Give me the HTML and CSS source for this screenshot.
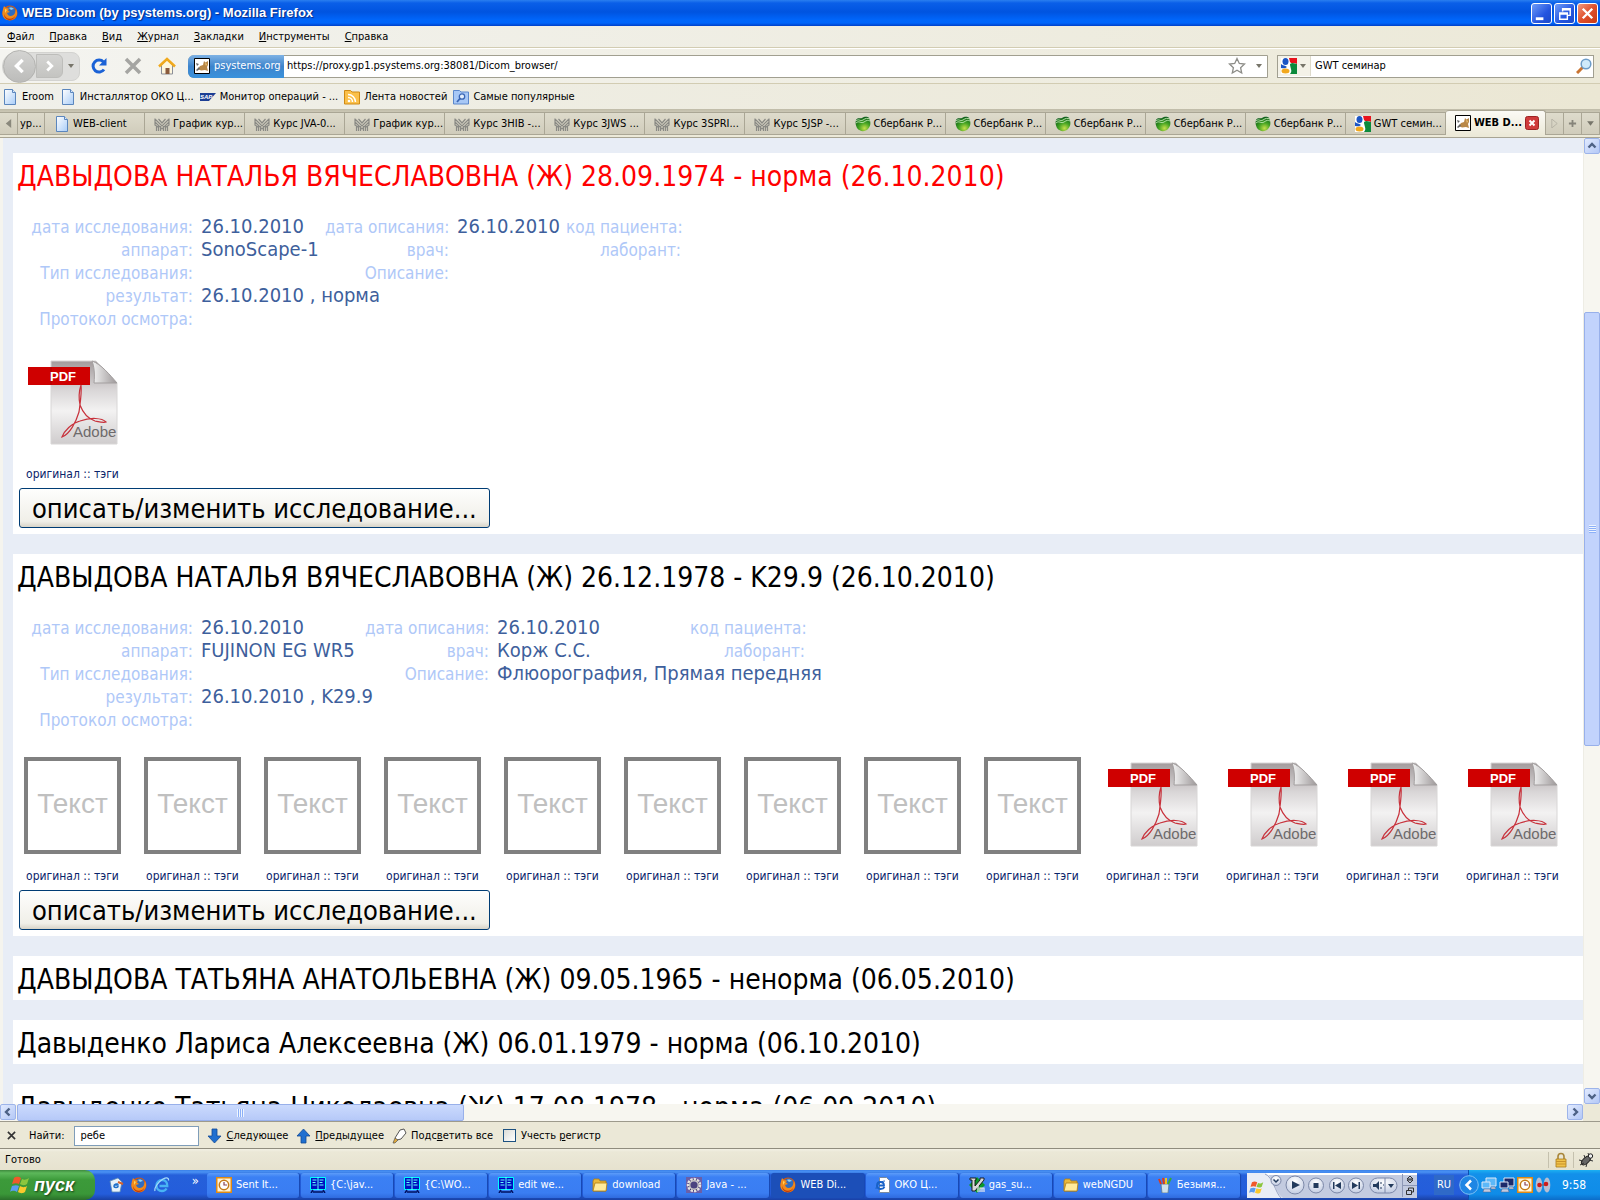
FILE: index.html
```html
<!DOCTYPE html>
<html lang="ru">
<head>
<meta charset="utf-8">
<title>WEB Dicom (by psystems.org)</title>
<link rel="stylesheet" href="styles.css">
</head>
<body>
<svg class="defs" width="0" height="0" aria-hidden="true">
  <defs>
    <linearGradient id="g-sheet" x1="0" y1="0" x2="1" y2="1"><stop offset="0" stop-color="#fff"/><stop offset="1" stop-color="#a9cdf8"/></linearGradient>
    <linearGradient id="g-pdf" x1="0" y1="0" x2="0" y2="1"><stop offset="0" stop-color="#a39c9d"/><stop offset=".35" stop-color="#d9d6d7"/><stop offset=".6" stop-color="#f3f2f2"/><stop offset="1" stop-color="#cfcccd"/></linearGradient>
    <linearGradient id="g-fold" x1="0" y1="0" x2="1" y2="0"><stop offset="0" stop-color="#f4f4f4"/><stop offset="1" stop-color="#9c9798"/></linearGradient>
    <radialGradient id="g-green" cx=".6" cy=".8" r=".8"><stop offset="0" stop-color="#c5e04a"/><stop offset=".5" stop-color="#3fa021"/><stop offset="1" stop-color="#0d5a1c"/></radialGradient>
    <radialGradient id="g-btn" cx=".5" cy=".3" r=".8"><stop offset="0" stop-color="#fff"/><stop offset="1" stop-color="#b9c4de"/></radialGradient>
    <symbol id="i-page" viewBox="0 0 16 16"><path d="M2.500.5h8l3 3v12h-11z" fill="url(#g-sheet)" stroke="#5b86bd"/><path d="M10.500.5v3h3" fill="#dbe9fb" stroke="#5b86bd"/></symbol>
    <symbol id="i-fox" viewBox="0 0 16 16"><circle cx="8" cy="8" r="7.500" fill="#d9590b"/><circle cx="8.500" cy="6.500" r="5" fill="#2f6cc0"/><path d="M7 3c2-1 4 0 5 1-2 0-2 1-3 1z" fill="#8fd0f4"/><path d="M1 4 2 1l2 2 3 .5-1 2 2 1.500-3 1 1 2c2 2 6 1 7-2l1-4c2 4 1 7-1 9-3 3-8 3-11 0-2-2-2-5-1-9z" fill="#f08a1c"/><path d="M2 9c1 4 5 6 9 4 2-1 3-3 3-5 0 4-3 7-6 7s-6-2-6-6z" fill="#c23a0a"/><path d="M3 4l2 1-2 3z" fill="#ffd45a"/></symbol>
    <symbol id="i-cat" viewBox="0 0 16 16"><path d="M.5.5h15v15H.5z" fill="#fff" stroke="#000"/><path d="M4 11 6 8l3-1 1-4 1.500 1.500L14 3v4l-1 2 1 4-3-1-4 .5z" fill="#b98847"/><path d="M2 5l3 1-2 2zM2 12l3-3 1 2-3 2z" fill="#666"/><path d="M11 5l2 1-1 2z" fill="#f0c878"/></symbol>
    <symbol id="i-grid" viewBox="0 0 16 16"><path d="M1 3l7 7 7-7M1 6l7 7 7-7M1 9l3 2M15 9l-3 2M4.500 3l3.500 4 3.500-4M2.500 10v5M4.500 10v5M6.500 10v5M9.500 10v5M11.500 10v5M13.500 10v5M1 2.500v7M15 2.500v7" fill="none" stroke="#8a8a85" stroke-width="1.200"/></symbol>
    <symbol id="i-sber" viewBox="0 0 16 16"><path d="M1 4c2-3 4-1 6-2s5-2 7 0c2 4 2 8-1 11-3 3-8 3-11-1-1-2-2-5-1-8z" fill="url(#g-green)"/><path d="M1 5c3-3 4 1 7-1s4-2 7-1M1 7c3-3 5 1 8-1s4-2 6-1" fill="none" stroke="#bfeab0" stroke-width=".9"/></symbol>
    <symbol id="i-google" viewBox="0 0 16 16"><path fill="#fff" d="M0 0h16v16H0z"/><path d="M8 0h8v6c-3-2-6 0-7-2z" fill="#e8121c"/><path d="M9 6c3-2 5 0 7 0v10H9c3-3 0-6 0-10z" fill="#0b8a3c"/><ellipse cx="4.500" cy="3.500" rx="3" ry="3.500" fill="#1b55c4"/><path d="M0 6c2 2 4 1 6 3-2 2-4 1-6 1z" fill="#1b55c4"/><ellipse cx="4.500" cy="13" rx="4" ry="2.500" fill="#f2a81d"/></symbol>
    <symbol id="i-folder" viewBox="0 0 16 16"><path d="M1 4l1-2h5l1 2h6v10H1z" fill="#e9b83c" stroke="#b07d12" stroke-width=".8"/><path d="M1 14 3 6h12l-1 8z" fill="#ffeb9c" stroke="#b07d12" stroke-width=".8"/></symbol>
    <symbol id="i-far" viewBox="0 0 16 16"><path d="M.5.5h15v12H.5z" fill="#0010c0" stroke="#0ff"/><path d="M8 0v13M2.500 3h4M2.500 5.500h3M2.500 8h4M9.500 3h4M9.500 5.500h3M9.500 8h4" stroke="#6ff" stroke-width="1" fill="none"/><path d="M3 13l-2 3M13 13l2 3M3 15h10" stroke="#001060" stroke-width="1.500"/></symbol>
    <symbol id="i-outlook" viewBox="0 0 16 16"><path d="M.75.75h14.500v14.500H.75z" fill="#fff3d6" stroke="#e08a12" stroke-width="1.500"/><circle cx="8" cy="8" r="4.700" fill="#fff" stroke="#c47a18" stroke-width="1.500"/><path d="M8 5v3h3" fill="none" stroke="#845" stroke-width="1.200"/></symbol>
    <symbol id="i-ie" viewBox="0 0 16 16"><path d="M12.500 11.500c-1 2-3 2.500-4.500 2.500-3.500 0-5.500-2.500-5.500-5.500S5 3 8 3c3.500 0 5.500 2.500 5.300 6H5.500" fill="none" stroke="#49b4f4" stroke-width="2.300"/><path d="M1 14c-1-3 3-9 8-12 4-2 6-1 5.500 1.500" fill="none" stroke="#a8dcfa" stroke-width="1.200"/></symbol>
    <symbol id="i-iepage" viewBox="0 0 16 16"><path d="M4.500.5h7l3 3v12h-10z" fill="#fff" stroke="#7a8aa0"/><path d="M9.500 10c-1 2-3 2-4 2-2 0-3.500-1.500-3.500-3.500S3.500 5 5.500 5 9 6.500 9 8.500H4" fill="none" stroke="#1762c8" stroke-width="1.800"/><path d="M1 12c0-3 4-8 9-8" fill="none" stroke="#1762c8"/></symbol>
    <symbol id="i-eclipse" viewBox="0 0 16 16"><path d="M0 0h16v16H0z" fill="#6a5fa8"/><circle cx="8" cy="8" r="6" fill="#3a3560" stroke="#e4e2e0" stroke-width="2.400" stroke-dasharray="2.400 1"/><circle cx="8" cy="8" r="4.300" fill="#4a4480" stroke="#c9c7c8" stroke-width="1.400"/></symbol>
    <symbol id="i-vim" viewBox="0 0 16 16"><path d="M8 0l8 8-8 8-8-8z" fill="#0a9a2a"/><path d="M1 1h6v2H6v6l5-6V1h4v2L6 14H3V3H1z" fill="#d8d8d8" stroke="#111" stroke-width=".9"/><path d="M9 9v6M11 15v-4h2v4M13 11h2v4" stroke="#eee" fill="none" stroke-width="1.200"/></symbol>
    <symbol id="i-paint" viewBox="0 0 16 16"><path d="M4 7h8l-1 9H5z" fill="#cfe0ea" stroke="#5b7890" stroke-width=".8"/><path d="M4 7 2 2M7 7 6 1" stroke="#e03a1c" stroke-width="2"/><path d="M9 7V1" stroke="#f2c11c" stroke-width="2"/><path d="M11 7l3-6" stroke="#38a838" stroke-width="2"/></symbol>
    <symbol id="i-flag" viewBox="0 0 20 20"><path d="M4 3c3-2 5-1 7 0L9 9C7 8 5 8 2 9z" fill="#f0592a"/><path d="M12 4c2 1 4 1 7-1l-2 6c-3 2-5 1-7 0z" fill="#8cc63e"/><path d="M2 11c3-1 5-1 7 0l-2 6c-2-1-4-2-7 0z" fill="#5a9cf0"/><path d="M10 11c2 1 4 2 7 0l-2 6c-3 2-5 1-7 0z" fill="#fbc92d"/></symbol>
    <symbol id="i-pc" viewBox="0 0 16 16"><path d="M5 1h10v8H5z" fill="var(--screen)" stroke="#dfe8f6"/><path d="M1 5h8v6H1z" fill="var(--screen)" stroke="#dfe8f6"/><path d="M3 12h6l1 3H2zM10 10h4l1 2h-5z" fill="#c3cbe0" stroke="#5a6788" stroke-width=".5"/></symbol>
    <symbol id="i-down" viewBox="0 0 8 8"><path d="M1 2h6L4 6z"/></symbol>
    <symbol id="i-chev" viewBox="0 0 10 10"><path d="M1.500 6.500 5 3l3.500 3.500" fill="none" stroke="#4d6185" stroke-width="2.400"/></symbol>
    <symbol id="i-pdf" viewBox="0 0 97 97">
      <path d="M27 6h45l21 22v61H27z" fill="url(#g-pdf)" stroke="#d8d6d6"/>
      <path d="M68 6c2 5 3 12 2 22h23C86 20 77 9 68 6z" fill="url(#g-fold)" stroke="#a39f9f"/>
      <path d="M4 12h62v18H4z" fill="#cf0000"/>
      <path d="M27 12v18" stroke="#a80000"/>
      <text x="26" y="26" class="pdf-tag">PDF</text>
      <path d="M57 30c-3 9-2 15-1 20 3 8 9 14 15 16 5 1 9 2 11 1-4-4-15-5-26-1-8 2-16 10-18 16 8-3 14-15 17-25 1-8 3-19 2-27z" fill="none" stroke="#c8323c" stroke-width="1.200"/>
      <text x="49" y="82" class="pdf-brand">Adobe</text>
    </symbol>
  </defs>
</svg>

<header class="chrome">
  <div class="titlebar">
    <svg class="ico"><use href="#i-fox"/></svg>
    <h1>WEB Dicom (by psystems.org) - Mozilla Firefox</h1>
    <div class="win-buttons">
      <button class="win" aria-label="Свернуть"><svg viewBox="0 0 20 20"><path d="M4 14h8v3H4z" fill="#fff"/></svg></button>
      <button class="win" aria-label="Восстановить"><svg viewBox="0 0 20 20"><path d="M8 8V5h8v7h-3M8 6h8M5 9.500h8V16H5zM5 10.500h8" fill="none" stroke="#fff" stroke-width="1.500"/></svg></button>
      <button class="win close" aria-label="Закрыть"><svg viewBox="0 0 20 20"><path d="M5 5l10 10M15 5 5 15" stroke="#fff" stroke-width="2.500"/></svg></button>
    </div>
  </div>

  <nav class="menubar">
    <button><u>Ф</u>айл</button><button><u>П</u>равка</button><button><u>В</u>ид</button><button><u>Ж</u>урнал</button><button><u>З</u>акладки</button><button><u>И</u>нструменты</button><button><u>С</u>правка</button>
  </nav>

  <div class="navbar">
    <div class="history">
      <button class="back" aria-label="Назад"><svg viewBox="0 0 32 32"><path d="M19 9l-7 7 7 7" fill="none" stroke="#fff" stroke-width="4"/></svg></button>
      <button class="fwd" aria-label="Вперёд"><svg viewBox="0 0 24 24"><path d="M9 7l5 5-5 5" fill="none" stroke="#fff" stroke-width="3"/></svg></button>
      <svg class="caret"><use href="#i-down"/></svg>
    </div>
    <button class="tool" aria-label="Обновить"><svg viewBox="0 0 18 18"><path d="M14 12.500A6 6 0 1 1 13.500 5" fill="none" stroke="#1b62d6" stroke-width="3"/><path d="M16.500 1v7.500H9z" fill="#1b62d6"/></svg></button>
    <button class="tool" aria-label="Остановить"><svg viewBox="0 0 18 18"><path d="M2 2l14 14M16 2 2 16" stroke="#a5a5a2" stroke-width="3.500"/></svg></button>
    <button class="tool" aria-label="Домой"><svg viewBox="0 0 18 18"><path d="M3.500 8v9h11V8L9 3z" fill="#fdf6dd" stroke="#8b8f98"/><path d="M1 9.500 9 2l8 7.500" fill="none" stroke="#f0a91c" stroke-width="2.500"/><path d="M7.500 11h4v6h-4z" fill="#8a5a3c"/></svg></button>
    <div class="urlbar">
      <span class="identity"><svg class="ico"><use href="#i-cat"/></svg>psystems.org</span>
      <input aria-label="Адрес" value="https://proxy.gp1.psystems.org:38081/Dicom_browser/">
      <svg class="star" viewBox="0 0 18 18"><path d="M9 1.500l2.300 5 5.200.6-3.900 3.600 1.100 5.300L9 13.300 4.300 16l1.100-5.300L1.500 7.100l5.200-.6z" fill="#fff" stroke="#8d8d88" stroke-width="1.300"/></svg>
      <svg class="caret"><use href="#i-down"/></svg>
    </div>
    <div class="searchbar">
      <span class="engine"><svg class="ico"><use href="#i-google"/></svg><svg class="caret"><use href="#i-down"/></svg></span>
      <input aria-label="Поиск" value="GWT семинар">
      <svg class="ico" viewBox="0 0 16 16"><path d="M1 15l6-6" stroke="#c97432" stroke-width="3"/><circle cx="10" cy="6" r="4.800" fill="#cfeafb" stroke="#6d9cc8" stroke-width="1.500"/></svg>
    </div>
  </div>

  <nav class="bookmarks">
    <a href="#"><svg class="ico"><use href="#i-page"/></svg>Eroom</a>
    <a href="#"><svg class="ico"><use href="#i-page"/></svg>Инсталлятор ОКО Ц...</a>
    <a href="#"><svg class="ico" viewBox="0 0 16 16"><path d="M0 4h16l-7 8H0z" fill="#1c3e94"/><text x="0" y="10" class="sap">SAP</text></svg>Монитор операций - ...</a>
    <a href="#"><svg class="ico" viewBox="0 0 16 16"><path d="M.5 3V1.500h6L8 3h7.500v12H.5z" fill="#fbc04a" stroke="#cf8a14"/><circle cx="5" cy="12" r="1.300" fill="#fff"/><path d="M4 8.500a4.500 4.500 0 0 1 4.500 4.500M4 5.500a7.500 7.500 0 0 1 7.500 7.500" fill="none" stroke="#fff" stroke-width="1.500"/></svg>Лента новостей</a>
    <a href="#"><svg class="ico" viewBox="0 0 16 16"><path d="M.5 3V1.500h6L8 3h7.500v12H.5z" fill="#a8c8f6" stroke="#5c88cc"/><circle cx="9" cy="7.500" r="2.700" fill="#e4effc" stroke="#3a66b4" stroke-width="1.300"/><path d="M7 9.500 4 13" stroke="#3a66b4" stroke-width="1.800"/></svg>Самые популярные</a>
  </nav>

  <div class="tabs">
    <button class="strip" aria-label="Влево"><svg viewBox="0 0 8 10"><path d="M7 0v10L1 5z" fill="#8a887c"/></svg></button>
    <button class="tab cut">ур...</button>
    <button class="tab"><svg class="ico"><use href="#i-page"/></svg>WEB-client</button>
    <button class="tab"><svg class="ico"><use href="#i-grid"/></svg>График кур...</button>
    <button class="tab"><svg class="ico"><use href="#i-grid"/></svg>Курс JVA-0...</button>
    <button class="tab"><svg class="ico"><use href="#i-grid"/></svg>График кур...</button>
    <button class="tab"><svg class="ico"><use href="#i-grid"/></svg>Курс 3HIB -...</button>
    <button class="tab"><svg class="ico"><use href="#i-grid"/></svg>Курс 3JWS ...</button>
    <button class="tab"><svg class="ico"><use href="#i-grid"/></svg>Курс 3SPRI...</button>
    <button class="tab"><svg class="ico"><use href="#i-grid"/></svg>Курс 5JSP -...</button>
    <button class="tab"><svg class="ico"><use href="#i-sber"/></svg>Сбербанк Р...</button>
    <button class="tab"><svg class="ico"><use href="#i-sber"/></svg>Сбербанк Р...</button>
    <button class="tab"><svg class="ico"><use href="#i-sber"/></svg>Сбербанк Р...</button>
    <button class="tab"><svg class="ico"><use href="#i-sber"/></svg>Сбербанк Р...</button>
    <button class="tab"><svg class="ico"><use href="#i-sber"/></svg>Сбербанк Р...</button>
    <button class="tab"><svg class="ico"><use href="#i-google"/></svg>GWT семин...</button>
    <button class="tab active"><svg class="ico"><use href="#i-cat"/></svg>WEB D...<svg class="tab-close" viewBox="0 0 14 14"><rect x=".5" y=".5" width="13" height="13" rx="2" fill="#cf3b3b" stroke="#9c2323"/><path d="M4.500 4.500l5 5M9.500 4.500l-5 5" stroke="#fff" stroke-width="2"/></svg></button>
    <button class="strip" aria-label="Вправо"><svg viewBox="0 0 8 10"><path d="M1 0v10l6-5z" fill="none" stroke="#b3b1a4"/></svg></button>
    <button class="strip" aria-label="Новая вкладка"><svg viewBox="0 0 10 10"><path d="M5 1v8M1 5h8" stroke="#86847a" stroke-width="2"/></svg></button>
    <button class="strip" aria-label="Список вкладок"><svg class="caret"><use href="#i-down"/></svg></button>
  </div>
</header>

<div class="viewport">
  <main class="records">
    <article class="record urgent">
      <h2>ДАВЫДОВА НАТАЛЬЯ ВЯЧЕСЛАВОВНА (Ж) 28.09.1974 - норма (26.10.2010)</h2>
      <table class="meta">
        <colgroup><col class="c-label"><col class="c-device"><col class="c-second"><col class="c-date"><col class="c-third"></colgroup>
        <tr><th>дата исследования:</th><td>26.10.2010</td><th>дата описания:</th><td>26.10.2010</td><th>код пациента:</th></tr>
        <tr><th>аппарат:</th><td>SonoScape-1</td><th>врач:</th><td></td><th>лаборант:</th></tr>
        <tr><th>Тип исследования:</th><td></td><th>Описание:</th><td colspan="2"></td></tr>
        <tr><th>результат:</th><td colspan="4">26.10.2010 , норма</td></tr>
        <tr><th>Протокол осмотра:</th><td colspan="4"></td></tr>
      </table>
      <div class="gallery">
        <div class="item"><svg class="pdf"><use href="#i-pdf"/></svg><p><a href="#">оригинал</a> :: <a href="#">тэги</a></p></div>
      </div>
      <button class="edit">описать/изменить исследование...</button>
    </article>

    <article class="record">
      <h2>ДАВЫДОВА НАТАЛЬЯ ВЯЧЕСЛАВОВНА (Ж) 26.12.1978 - K29.9 (26.10.2010)</h2>
      <table class="meta wide">
        <colgroup><col class="c-label"><col class="c-device"><col class="c-second"><col class="c-date"><col class="c-third"></colgroup>
        <tr><th>дата исследования:</th><td>26.10.2010</td><th>дата описания:</th><td>26.10.2010</td><th>код пациента:</th></tr>
        <tr><th>аппарат:</th><td>FUJINON EG WR5</td><th>врач:</th><td>Корж С.С.</td><th>лаборант:</th></tr>
        <tr><th>Тип исследования:</th><td></td><th>Описание:</th><td colspan="2">Флюорография, Прямая передняя</td></tr>
        <tr><th>результат:</th><td colspan="4">26.10.2010 , K29.9</td></tr>
        <tr><th>Протокол осмотра:</th><td colspan="4"></td></tr>
      </table>
      <div class="gallery">
        <div class="item"><div class="text-doc">Текст</div><p><a href="#">оригинал</a> :: <a href="#">тэги</a></p></div>
        <div class="item"><div class="text-doc">Текст</div><p><a href="#">оригинал</a> :: <a href="#">тэги</a></p></div>
        <div class="item"><div class="text-doc">Текст</div><p><a href="#">оригинал</a> :: <a href="#">тэги</a></p></div>
        <div class="item"><div class="text-doc">Текст</div><p><a href="#">оригинал</a> :: <a href="#">тэги</a></p></div>
        <div class="item"><div class="text-doc">Текст</div><p><a href="#">оригинал</a> :: <a href="#">тэги</a></p></div>
        <div class="item"><div class="text-doc">Текст</div><p><a href="#">оригинал</a> :: <a href="#">тэги</a></p></div>
        <div class="item"><div class="text-doc">Текст</div><p><a href="#">оригинал</a> :: <a href="#">тэги</a></p></div>
        <div class="item"><div class="text-doc">Текст</div><p><a href="#">оригинал</a> :: <a href="#">тэги</a></p></div>
        <div class="item"><div class="text-doc">Текст</div><p><a href="#">оригинал</a> :: <a href="#">тэги</a></p></div>
        <div class="item"><svg class="pdf"><use href="#i-pdf"/></svg><p><a href="#">оригинал</a> :: <a href="#">тэги</a></p></div>
        <div class="item"><svg class="pdf"><use href="#i-pdf"/></svg><p><a href="#">оригинал</a> :: <a href="#">тэги</a></p></div>
        <div class="item"><svg class="pdf"><use href="#i-pdf"/></svg><p><a href="#">оригинал</a> :: <a href="#">тэги</a></p></div>
        <div class="item"><svg class="pdf"><use href="#i-pdf"/></svg><p><a href="#">оригинал</a> :: <a href="#">тэги</a></p></div>
      </div>
      <button class="edit">описать/изменить исследование...</button>
    </article>

    <article class="record"><h2>ДАВЫДОВА ТАТЬЯНА АНАТОЛЬЕВНА (Ж) 09.05.1965 - ненорма (06.05.2010)</h2></article>
    <article class="record"><h2>Давыденко Лариса Алексеевна (Ж) 06.01.1979 - норма (06.10.2010)</h2></article>
    <article class="record"><h2>Давыденко Татьяна Николаевна (Ж) 17.08.1978 - норма (06.09.2010)</h2></article>
  </main>
  <div class="vscroll">
    <span class="sb-btn"><svg><use href="#i-chev"/></svg></span>
    <span class="track before"></span><span class="thumb"><i></i></span><span class="track after"></span>
    <span class="sb-btn down"><svg><use href="#i-chev"/></svg></span>
  </div>
  <div class="hscroll">
    <span class="sb-btn left"><svg><use href="#i-chev"/></svg></span>
    <span class="thumb"><i></i></span><span class="track"></span>
    <span class="sb-btn right"><svg><use href="#i-chev"/></svg></span>
  </div>
  <span class="corner"></span>
</div>

<footer>
  <div class="findbar">
    <button aria-label="Закрыть панель"><svg class="x" viewBox="0 0 10 10"><path d="M1 1l8 8M9 1 1 9" stroke="#333" stroke-width="1.800"/></svg></button>
    <label for="find">Найти:</label>
    <input id="find" type="text" value="ребе">
    <button><svg class="ico" viewBox="0 0 16 16"><path d="M5 1h5v7h4l-6.500 7L1 8h4z" fill="#1f6fd0" stroke="#134a96" stroke-width=".8"/></svg><span><u>С</u>ледующее</span></button>
    <button><svg class="ico" viewBox="0 0 16 16"><path d="M5 15h5V8h4L7.500 1 1 8h4z" fill="#1f6fd0" stroke="#134a96" stroke-width=".8"/></svg><span><u>П</u>редыдущее</span></button>
    <button><svg class="ico" viewBox="0 0 16 16"><path d="M3 10 8 2l4-1 2 4-5 6-4 1z" fill="#fff" stroke="#555"/><path d="M3 10l3 2-3 3H1z" fill="#e0a93c" stroke="#555" stroke-width=".7"/></svg><span>Подс<u>в</u>етить все</span></button>
    <label class="check"><input type="checkbox"><span>Учесть <u>р</u>егистр</span></label>
  </div>
  <div class="statusbar">
    <span class="status">Готово</span>
    <span class="cell"><svg class="ico" viewBox="0 0 16 16"><path d="M5 7V4.500a3 3 0 0 1 6 0V7" fill="none" stroke="#a8863a" stroke-width="1.600"/><path d="M3 7h10v8H3z" fill="#f0c24a" stroke="#a87b1a" stroke-width=".8"/><path d="M3 9.500h10M3 12h10" stroke="#c8922a"/></svg></span>
    <span class="cell"><svg class="ico" viewBox="0 0 16 16"><ellipse cx="8" cy="8.500" rx="5.500" ry="2.800" transform="rotate(-42 8 8.500)" fill="#666" stroke="#222"/><path d="M1 8l4 1M2 13l4-2M8 15l1-4M15 9l-4-1M6 3l1 3M10 1l1 3" stroke="#333"/><circle cx="12.500" cy="4" r="2.200" fill="#eee" stroke="#222"/></svg></span>
  </div>
  <div class="taskbar">
    <button class="start"><svg><use href="#i-flag"/></svg>пуск</button>
    <div class="quick">
      <svg class="ico" viewBox="0 0 16 16"><path d="M2 4l8-3 4 4-2 10H4z" fill="#e8f2fa" stroke="#5a89b4" stroke-width=".8"/><path d="M10 9c0 2-4 2-4 0s4-3 4-1H6" fill="none" stroke="#1f6fc8" stroke-width="1.500"/><path d="M10 5l5 2" stroke="#d8622a" stroke-width="2"/></svg>
      <svg class="ico"><use href="#i-fox"/></svg>
      <svg class="ico"><use href="#i-ie"/></svg>
      <span>»</span>
    </div>
    <div class="tasks">
      <button><svg class="ico"><use href="#i-outlook"/></svg>Sent It...</button>
      <button><svg class="ico"><use href="#i-far"/></svg>{C:\jav...</button>
      <button><svg class="ico"><use href="#i-far"/></svg>{C:\WO...</button>
      <button><svg class="ico"><use href="#i-far"/></svg>edit we...</button>
      <button><svg class="ico"><use href="#i-folder"/></svg>download</button>
      <button><svg class="ico"><use href="#i-eclipse"/></svg>Java - ...</button>
      <button class="current"><svg class="ico"><use href="#i-fox"/></svg>WEB Di...</button>
      <button><svg class="ico"><use href="#i-iepage"/></svg>ОКО Ц...</button>
      <button><svg class="ico"><use href="#i-vim"/></svg>gas_su...</button>
      <button><svg class="ico"><use href="#i-folder"/></svg>webNGDU</button>
      <button><svg class="ico"><use href="#i-paint"/></svg>Безымя...</button>
    </div>
    <svg class="player" viewBox="0 0 170 25">
      <path d="M0 0h170v25H0z" fill="#c3cbe0"/><path d="M0 1h170" stroke="#fff" stroke-width="2"/><path d="M0 0h18c8 2 10 20 18 25H0z" fill="#e9edf6"/><path d="M18 1c8 3 10 18 16 24" stroke="#9aa5c2" fill="none"/>
      <svg x="2" y="7" width="15" height="15"><use href="#i-flag"/></svg>
      <g fill="url(#g-btn)" stroke="#7c88a8"><circle cx="29" cy="7.500" r="5"/><circle cx="48" cy="12" r="9"/><circle cx="69" cy="12.500" r="7.500"/><circle cx="90" cy="12.500" r="7.500"/><circle cx="109" cy="12.500" r="7.500"/><rect x="123" y="5" width="27" height="15" rx="7.500"/></g>
      <path d="M138 5v15" stroke="#7c88a8"/>
      <path d="M26.500 6.500 29 9l2.500-2.500" fill="none" stroke="#223a5c" stroke-width="1.500"/>
      <path d="M45 8v8l8-4zM66.500 10h5v5h-5zM94 9v7l-6-3.500zM86 9h1.500v7H86zM105 9v7l6-3.500zM111.500 9h1.500v7h-1.500zM126 11h3l3-3v9l-3-3h-3zM141 11h6l-3 4z" fill="#223a5c"/><path d="M134 9v2M134 14v2M136 12h1" stroke="#223a5c"/>
      <path d="M155.500 1v23M156 12.500h14" stroke="#8d98b6"/><path d="M163 3l3 3h-6zM163 10l3-3h-6z" fill="none" stroke="#333"/><path d="M159.500 17.500h5v4h-5zM161.500 17v-2h5v4h-2" fill="none" stroke="#333"/>
    </svg>
    <span class="lang">RU</span>
    <div class="tray">
      <button class="expand" aria-label="Показать значки"><svg viewBox="0 0 20 20"><circle cx="10" cy="10" r="9.300" fill="#1e86e4" stroke="#7cc0f4"/><path d="M12 5.500 7.500 10l4.500 4.500" fill="none" stroke="#fff" stroke-width="2.500"/></svg></button>
      <svg class="ico lit"><use href="#i-pc"/></svg>
      <svg class="ico dim"><use href="#i-pc"/></svg>
      <svg class="ico"><use href="#i-outlook"/></svg>
      <svg class="ico" viewBox="0 0 16 16"><ellipse cx="4" cy="8" rx="3.300" ry="7.500" fill="#b8bdd0"/><ellipse cx="12" cy="8" rx="3.300" ry="7.500" fill="#b8bdd0"/><path d="M5 8h6" stroke="#666"/><circle cx="4.500" cy="8" r="2.300" fill="#cc1c1c"/><circle cx="11" cy="7" r="2.300" fill="#cc1c1c"/></svg>
      <time>9:58</time>
    </div>
  </div>
</footer>
</body>
</html>
```
FILE: styles.css
```css
* { box-sizing: border-box; }
html, body { margin: 0; height: 100%; }
body {
  display: flex;
  flex-direction: column;
  overflow: hidden;
  background: #ece9d8;
  color: #000;
  font: 11px/14px "DejaVu Sans Condensed", "Noto Sans", sans-serif;
}
button, input { font: inherit; color: inherit; margin: 0; padding: 0; border: 0; background: none; }
button { display: flex; align-items: center; white-space: nowrap; }
svg { display: block; flex: none; }
.defs { position: absolute; }
.ico { width: 16px; height: 16px; }
.caret { width: 8px; height: 8px; fill: #77756a; }

/* window frame */
.titlebar {
  display: flex;
  align-items: center;
  height: 26px;
  padding: 0 2px 0 2px;
  gap: 4px;
  background: linear-gradient(#2a7ff0 0, #0a5fe8 3px, #0054e0 12px, #0066fb 20px, #0065fa 23px, #0040c8 26px);
}
.titlebar h1 { flex: 1; margin: 0; color: #fff; font: bold 13px/20px "Liberation Sans", sans-serif; text-shadow: 1px 1px 1px #0a2a80; }
.win-buttons { display: flex; gap: 2px; }
.win { width: 21px; height: 21px; border: 1px solid #fff; border-radius: 3px; background: linear-gradient(135deg, #6f9cf8, #2455e0 60%, #1c49c8); }
.win svg { width: 19px; height: 19px; }
.win.close { background: linear-gradient(135deg, #f09a80, #e0502c 50%, #c93a14); }

.menubar { display: flex; gap: 15px; height: 22px; padding: 0 7px; background: linear-gradient(90deg, #f2f2ee, #ece9d8); border-bottom: 1px solid #d2ccb2; }

.navbar { display: flex; align-items: center; height: 36px; padding: 0 6px 0 2px; border-top: 1px solid #fff; border-bottom: 1px solid #d2ccb2; background: linear-gradient(90deg, #f4f4f0, #ece9d8); }
.history { display: flex; align-items: center; width: 78px; height: 29px; border: 1px solid #d3d3d0; border-radius: 14px 8px 8px 14px; background: #dededc; }
.back { width: 33px; height: 33px; border: 1px solid #b3b3b0; border-radius: 50%; background: linear-gradient(#d4d4d2, #bcbcba); justify-content: center; flex: none; }
.back svg { width: 28px; height: 28px; }
.fwd { width: 27px; height: 24px; border: 1px solid #bdbdba; border-radius: 0 6px 6px 0; background: linear-gradient(#d4d4d2, #c4c4c1); justify-content: center; margin-right: 4px; }
.fwd svg { width: 22px; height: 22px; }
.tool { width: 34px; justify-content: center; }
.tool svg { width: 18px; height: 18px; }
.history + .tool { margin-left: 2px; }
.urlbar, .searchbar { display: flex; align-items: center; height: 23px; border: 1px solid #a19f90; background: #fff; }
.urlbar { flex: 1; gap: 3px; padding-right: 4px; margin: 0 9px 0 4px; border-radius: 6px 0 0 6px; }
.urlbar input { flex: 1; }
.identity { display: flex; align-items: center; gap: 4px; height: 23px; width: 96px; margin-left: -1px; padding-left: 6px; border-radius: 6px 0 0 6px; background: linear-gradient(#7eb2e4, #3d84cc 50%, #3a92dc); color: #fff; white-space: nowrap; }
.star { width: 18px; height: 18px; margin-right: 6px; }
.searchbar { width: 317px; padding-right: 1px; }
.searchbar input { flex: 1; min-width: 0; padding-left: 4px; }
.engine { display: flex; align-items: center; gap: 2px; height: 20px; width: 33px; padding-left: 3px; border-right: 1px solid #dddacb; background: #f4f2e8; }

.bookmarks { display: flex; gap: 6px; height: 25px; padding: 0 2px; background: linear-gradient(90deg, #f0f0ea, #ebe7d4); }
.bookmarks a { display: flex; align-items: center; gap: 4px; color: #000; text-decoration: none; }
.sap { font: italic bold 6px "Liberation Sans", sans-serif; fill: #fff; }

.tabs { display: flex; align-items: flex-end; height: 29px; padding-bottom: 3px; background: linear-gradient(#bfbba8, #cbc7b5 3px, #d0ccba 25px, #a8a493 25px, #a8a493 26px, #ece9d8 26px, #ece9d8 28px, #a8a493 28px); }
.tab, .strip { height: 23px; border: 1px solid #aaa695; border-width: 1px 1px 1px 0; background: linear-gradient(#dedbcc, #d0ccbb); justify-content: center; }
.tab { flex: 1 1 0; justify-content: flex-start; gap: 3px; padding-left: 9px; min-width: 0; overflow: hidden; }
.tab.cut { flex: 0 0 27px; padding-left: 2px; }
.tab.active { height: 25px; border-radius: 3px 3px 0 0; border-bottom: 0; background: linear-gradient(#fbfaf5, #ece9d8); font-weight: bold; }
.tab-close { width: 14px; height: 14px; }
.strip { flex: 0 0 18px; }
.strip svg { width: 9px; height: 9px; }

/* page */
.viewport { flex: 1; min-height: 0; display: grid; grid-template: minmax(0, 1fr) 17px / minmax(0, 1fr) 17px; }
.records { overflow: hidden; display: flex; flex-direction: column; gap: 20px; padding: 15px 0 0 10px; border-left: 3px solid #f5f4ee; background: #e8edf6; }
.record { flex: none; background: #fff; }
.record h2 { margin: 0; padding: 6px 4px 2px; font-size: 28px; line-height: 36px; font-weight: normal; white-space: nowrap; }
.record.urgent h2 { color: #f00; }
.record:has(.meta) { padding-bottom: 6px; }
.meta { margin: 18px 0 0 10px; border-collapse: collapse; table-layout: fixed; width: 662px; }
.meta th, .meta td { height: 23px; padding: 0 4px; white-space: nowrap; }
.meta th { color: #afc8f8; font-size: 17px; line-height: 20px; font-weight: normal; text-align: right; }
.meta td { color: #3e5f9c; font-size: 20px; line-height: 23px; }
.c-label { width: 174px; }
.c-device { width: 124px; }
.c-second { width: 132px; }
.c-date { width: 109px; }
.c-third { width: 123px; }
.meta.wide { width: 786px; margin-bottom: 26px; }
.wide .c-device { width: 164px; }
.wide .c-date { width: 193px; }
.wide + .gallery { margin-top: 0; }
.gallery { display: flex; flex-wrap: wrap; margin-top: 25px; }
.item { display: flex; flex-direction: column; align-items: center; width: 120px; padding-right: 1px; }
.item p { margin: 13px 0 0; font-size: 12px; line-height: 18px; color: #0a246a; }
.item a { color: #0a246a; text-decoration: none; }
.pdf, .text-doc { width: 97px; height: 97px; }
.text-doc { display: flex; align-items: center; justify-content: center; padding-bottom: 4px; border: 4px solid #808080; color: #c0c0c0; font: 28px "Liberation Sans", sans-serif; }
.pdf-tag { font: bold 13px "Liberation Sans", sans-serif; fill: #fff; }
.pdf-brand { font: 15px "Liberation Sans", sans-serif; fill: #6e6a6b; }
.edit { height: 40px; margin: 5px 0 0 6px; padding: 1px 12px 0; border: 1px solid #003c74; border-radius: 3px; background: linear-gradient(#fefefd, #f0efe8 85%, #d8d4c8); font-size: 27px; }

/* scroll bars */
.vscroll, .hscroll { display: flex; background: #f7f6f0; }
.vscroll { flex-direction: column; border-left: 1px solid #eeede5; }
.track.before { flex: 158; }
.vscroll .thumb { flex: 433; }
.track.after { flex: 342; }
.hscroll .thumb { flex: 446; margin-left: 1px; }
.hscroll .track { flex: 1104; }
.thumb { display: flex; align-items: center; justify-content: center; border: 1px solid #98b0ea; border-radius: 2px; background: #c2d3fc; }
.hscroll .thumb { background: linear-gradient(#cbdafd, #b6c9f8); }
.thumb i { width: 7px; height: 8px; background: repeating-linear-gradient(#eef4fe 0 1px, #8cb0f8 1px 2px); }
.hscroll .thumb i { background: repeating-linear-gradient(90deg, #eef4fe 0 1px, #8cb0f8 1px 2px); }
.sb-btn { flex: none; display: flex; align-items: center; justify-content: center; width: 16px; height: 16px; border: 1px solid #9db4ea; border-radius: 2px; background: linear-gradient(135deg, #e1eafe, #b4c8f6); }
.sb-btn svg { width: 10px; height: 10px; }
.down svg { transform: rotate(180deg); }
.left svg { transform: rotate(-90deg); }
.right svg { transform: rotate(90deg); }
.corner { background: #ece9d8; }

/* bars below the page */
.findbar { display: flex; align-items: center; height: 28px; padding: 1px 7px 0; border-top: 1px solid #9d9a8c; border-bottom: 1px solid #8f8c7e; background: #ebe8d7; }
.findbar button { gap: 3px; margin-right: 8px; }
.findbar .x { width: 9px; height: 9px; margin-right: 5px; }
.findbar input[type=text] { width: 125px; height: 20px; margin: 0 8px 0 10px; padding: 0 5px; border: 1px solid #7f9db9; background: #fff; }
.findbar .check { display: flex; align-items: center; gap: 5px; margin-left: 2px; }
.check input { appearance: none; width: 13px; height: 13px; border: 1px solid #1c5180; background: linear-gradient(135deg, #dcdcd7, #fff); }
.statusbar { display: flex; align-items: center; height: 21px; padding-right: 2px; background: linear-gradient(#f2f0e4, #ebe8d7 3px, #e6e2cf); }
.status { flex: 1; padding-left: 5px; }
.cell { padding: 0 4px; border-left: 1px solid #c5c1ae; }

.taskbar { display: flex; align-items: center; height: 30px; background: linear-gradient(#3a80e8, #4a92f4 2px, #2560da 5px, #245ddb 24px, #1941a5 30px); color: #fff; }
.start { gap: 4px; width: 95px; height: 30px; padding-left: 10px; border-radius: 0 10px 10px 0; background: linear-gradient(#3f8a3e, #5cb85a 3px, #3c9a3a 10px, #3a9738 24px, #2a6f2a); color: #fff; font: italic bold 18px/24px "Liberation Sans", sans-serif; text-shadow: 1px 1px 2px #163a16; }
.start svg { width: 20px; height: 20px; }
.quick { display: flex; align-items: center; gap: 7px; width: 112px; padding-left: 13px; }
.quick span { flex: 1; padding: 0 8px 8px 0; text-align: right; font-size: 13px; }
.tasks { flex: 1; display: grid; grid-template-columns: repeat(11, minmax(0, 1fr)); gap: 2px; }
.tasks button { height: 25px; gap: 4px; padding-left: 9px; border-radius: 3px; background: linear-gradient(#5c9cfa, #3b80f4 4px, #3a7df2 20px, #2f6ade); box-shadow: 1px 0 1px #1848b0; overflow: hidden; }
.tasks .current { background: #1c4fb8; }
.player { width: 170px; height: 25px; margin: 0 10px 0 7px; }
.lang { padding: 3px; margin: 0 14px 0 7px; background: #2f69c8; }
.tray { display: flex; align-items: center; gap: 2px; width: 132px; height: 30px; border-left: 1px solid #0b50b0; background: linear-gradient(#1cb0f2, #1290ea 4px, #0f8ce8 24px, #0c6cc8); }
.expand { width: 20px; margin-left: -10px; }
.expand svg { width: 20px; height: 20px; }
.lit { --screen: #5cb8f8; }
.dim { --screen: #1c2a6a; }
.tray time { padding-left: 9px; font-size: 12px; }
```
